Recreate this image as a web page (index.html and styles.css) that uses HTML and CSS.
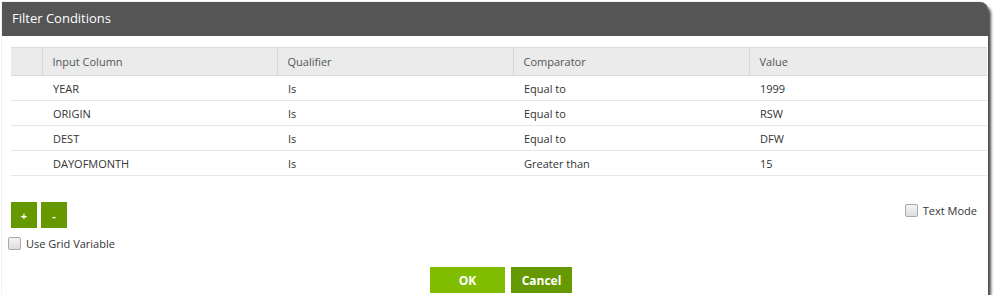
FILE: index.html
```html
<!DOCTYPE html>
<html lang="en">
<head>
  <meta charset="UTF-8">
  <title>Filter Conditions</title>
  <link rel="stylesheet" href="styles.css">
</head>
<body>

  <div class="dialog">
    <div class="titlebar">Filter Conditions</div>

    <div class="content">
      <table class="grid">
        <thead>
          <tr>
            <th class="sel"></th>
            <th class="c1">Input Column</th>
            <th class="c2">Qualifier</th>
            <th class="c3">Comparator</th>
            <th>Value</th>
          </tr>
        </thead>
        <tbody>
          <tr><td class="sel"></td><td>YEAR</td><td>Is</td><td>Equal to</td><td>1999</td></tr>
          <tr><td class="sel"></td><td>ORIGIN</td><td>Is</td><td>Equal to</td><td>RSW</td></tr>
          <tr><td class="sel"></td><td>DEST</td><td>Is</td><td>Equal to</td><td>DFW</td></tr>
          <tr><td class="sel"></td><td>DAYOFMONTH</td><td>Is</td><td>Greater than</td><td>15</td></tr>
        </tbody>
      </table>

      <div class="tools">
        <div class="small-btns">
          <button class="sq">+</button>
          <button class="sq">-</button>
        </div>
        <label class="check"><span class="box"></span>Text Mode</label>
      </div>

      <label class="check grid-var"><span class="box"></span>Use Grid Variable</label>

      <div class="footer">
        <button class="btn ok">OK</button>
        <button class="btn cancel">Cancel</button>
      </div>
    </div>
  </div>

</body>
</html>
```

FILE: styles.css
```css
body {
  margin: 0;
  padding: 2px 0 0 2px;
  background-color: #ffffff;
  font-family: 'Open Sans', 'Segoe UI', sans-serif;
  color: #333;
}

.dialog {
  width: 986px;
  height: 293px;
  background-color: #fff;
  border-radius: 0 8px 0 0;
  box-shadow: 3px 4px 3px rgba(0,0,0,0.7), 0 0 1px rgba(0,0,0,0.5);
}

.titlebar {
  height: 34px;
  line-height: 33px;
  padding-left: 10px;
  background-color: #555555;
  color: #fff;
  font-size: 13px;
  border-radius: 0 8px 0 0;
}

.content {
  padding: 11px 1px 0 9px;
}

.grid {
  width: 100%;
  border-collapse: collapse;
  font-size: 11px;
}

.grid th {
  height: 27px;
  background-color: #ebebeb;
  border-top: 1px solid #dcdcdc;
  border-bottom: 1px solid #d8d8d8;
  border-left: 1px solid #d6d6d6;
  color: #555;
  font-weight: normal;
  text-align: left;
  padding: 0 10px;
}

.grid th:first-child {
  border-left: none;
}

.grid td {
  height: 24px;
  border-bottom: 1px solid #e6e6e6;
  padding: 0 11px;
  color: #333;
}

.grid .sel {
  width: 9px;
}

.grid .c1 {
  width: 214px;
}

.grid .c2 {
  width: 215px;
}

.grid .c3 {
  width: 215px;
}

.tools {
  display: flex;
  justify-content: space-between;
  align-items: flex-start;
  margin-top: 26px;
  padding-right: 10px;
}

.small-btns {
  display: flex;
  gap: 4px;
}

.sq {
  width: 26px;
  height: 26px;
  border: none;
  padding: 0;
  background-color: #669900;
  color: #fff;
  font-family: 'Open Sans', sans-serif;
  font-weight: bold;
  font-size: 11px;
}

.check {
  display: flex;
  align-items: center;
  font-size: 11px;
  color: #333;
  margin-top: 1px;
}

.box {
  display: inline-block;
  width: 11px;
  height: 11px;
  margin-right: 5px;
  border: 1px solid #a8a8a8;
  border-radius: 2px;
  background: linear-gradient(#f4f4f4, #dedede);
}

.grid-var {
  margin: 8px 0 0 -3px;
}

.footer {
  display: flex;
  justify-content: center;
  gap: 6px;
  margin-top: 16px;
  padding-left: 4px;
}

.btn {
  height: 26px;
  border: none;
  color: #fff;
  font-family: 'Open Sans', sans-serif;
  font-weight: bold;
  font-size: 12px;
}

.ok {
  width: 75px;
  background-color: #80bd01;
}

.cancel {
  width: 61px;
  background-color: #669900;
}
```
